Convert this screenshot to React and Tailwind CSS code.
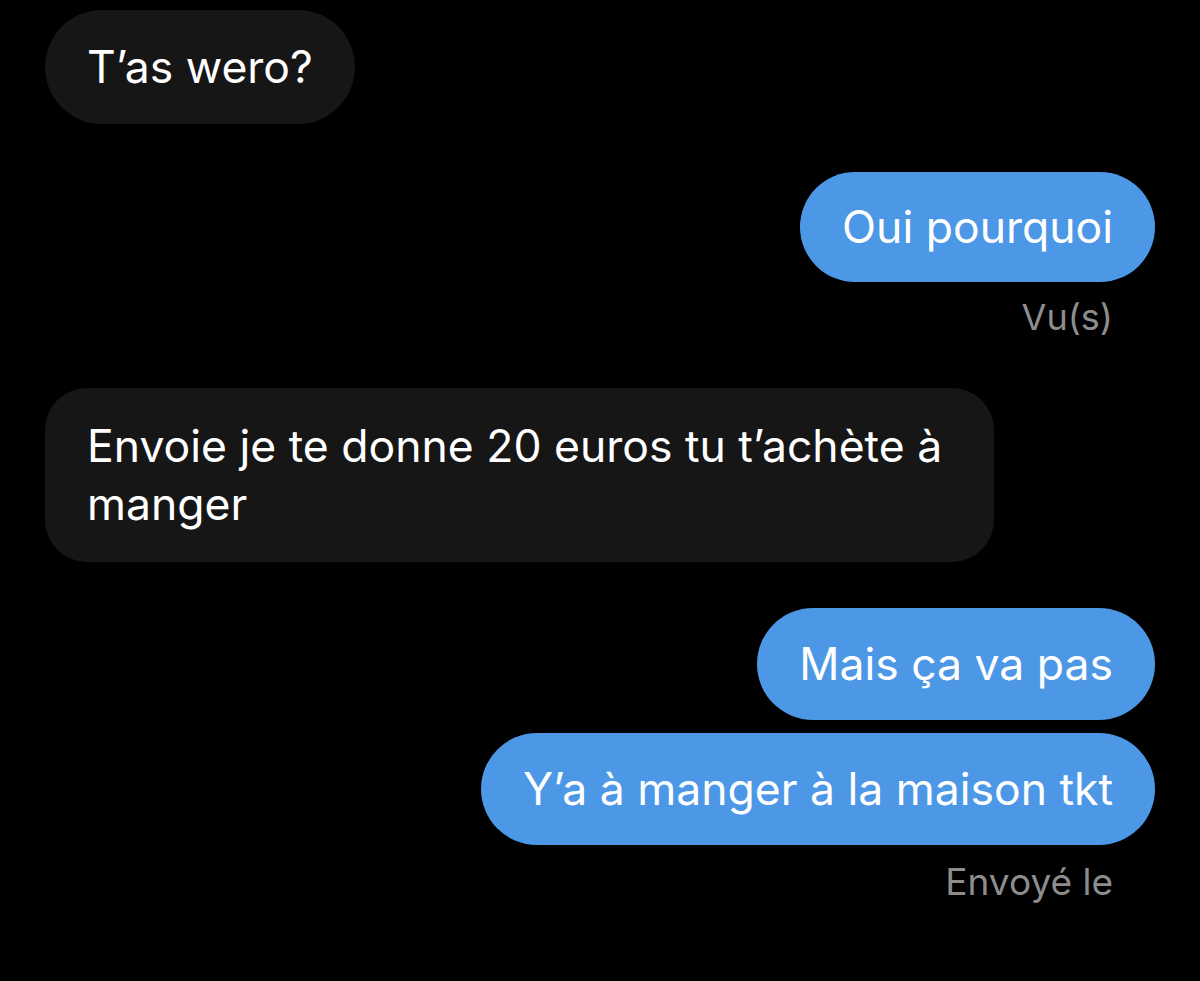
export default function App() {
  const font = { fontFamily: 'Inter, "Liberation Sans", sans-serif' };
  return (
    <div className="w-[1200px] h-[981px] bg-black overflow-hidden flex flex-col pt-[10px] px-[45px] text-[44.5px] leading-[58px]" style={font}>
      <div className="self-start bg-[#161616] text-white rounded-[57px] px-[42px] py-[28px]">T’as wero?</div>
      <div className="self-end mt-[48px] bg-[#4c98e7] text-white rounded-[55px] px-[42px] py-[26px]">Oui pourquoi</div>
      <div className="self-end mt-[13px] mr-[42px] text-[#8d8d8d] text-[36px] leading-[44px]">Vu(s)</div>
      <div className="self-start mt-[49px] w-[949px] bg-[#161616] text-white rounded-[42px] pl-[42px] pr-[30px] py-[29px]">Envoie je te donne 20 euros tu t’achète à manger</div>
      <div className="self-end mt-[46px] bg-[#4c98e7] text-white rounded-[56px] px-[42px] py-[27px]">Mais ça va pas</div>
      <div className="self-end mt-[13px] bg-[#4c98e7] text-white rounded-[56px] px-[42px] py-[27px]">Y’a à manger à la maison tkt</div>
      <div className="self-end mt-[15px] mr-[42px] text-[#8d8d8d] text-[37px] leading-[44px]">Envoyé le</div>
    </div>
  );
}
